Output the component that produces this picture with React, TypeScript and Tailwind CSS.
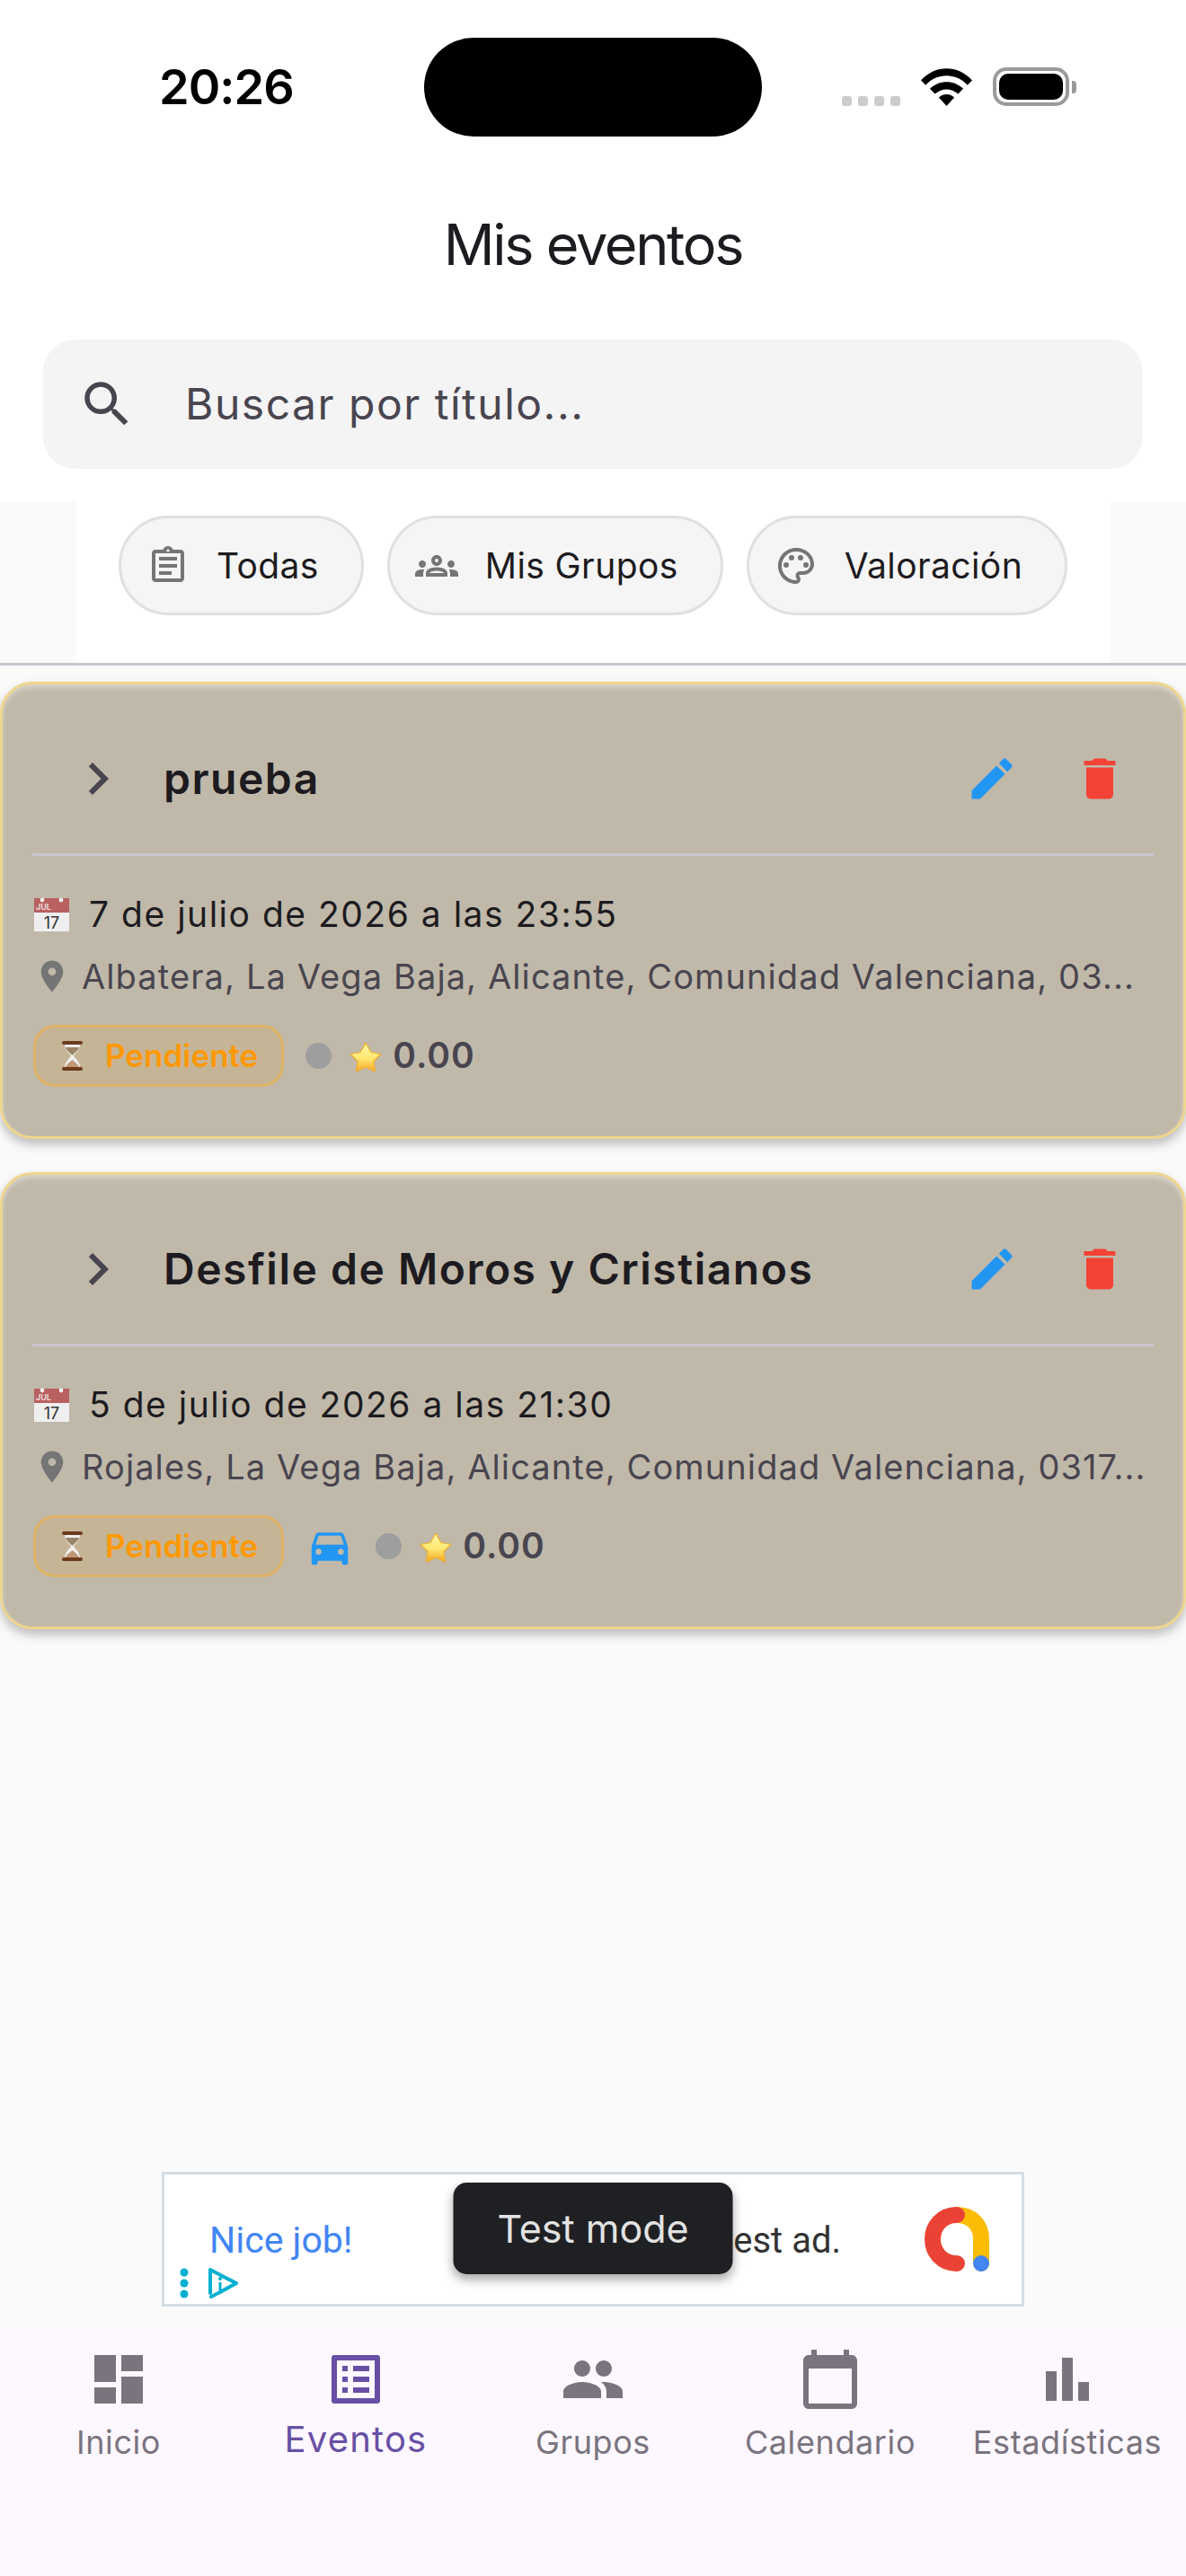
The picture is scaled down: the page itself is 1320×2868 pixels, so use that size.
import React from "react";
import {
  MdSearch, MdChevronRight, MdEdit, MdDelete, MdPlace, MdDirectionsCar,
  MdOutlineAssignment, MdOutlineGroups, MdOutlinePalette,
  MdDashboard, MdListAlt, MdPeople, MdCalendarToday,
} from "react-icons/md";

function CalendarEmoji() {
  return (
    <svg width="39" height="38" viewBox="0 0 39 38" className="ml-px shrink-0">
      <rect x="0" y="1" width="39" height="37" fill="#efefef" />
      <rect x="0" y="1" width="39" height="16" fill="#b96060" />
      <circle cx="9" cy="3" r="2.4" fill="#eee" />
      <circle cx="30" cy="3" r="2.4" fill="#eee" />
      <text x="2" y="14" fontSize="9" fontFamily="Inter" fontWeight="600" fill="#f3e4e4">JUL</text>
      <text x="19.5" y="35" fontSize="18" fontFamily="Inter" textAnchor="middle" fill="#333">17</text>
    </svg>
  );
}

function Hourglass() {
  return (
    <svg width="23" height="33" viewBox="0 0 23 33" className="shrink-0">
      <path d="M3 3 H20 C20 11 14 14 13 16.5 C14 19 20 23 20 30 H3 C3 23 9 19 10 16.5 C9 14 3 11 3 3Z" fill="#efefef" />
      <path d="M4 7 H19 C18 11 14 13 11.5 16 C9 13 5 11 4 7Z" fill="#9c8468" />
      <path d="M11.5 21 C15 24 18 26 19 29 H4 C5 26 8 24 11.5 21Z" fill="#c09878" />
      <rect x="0" y="0" width="23" height="4" rx="2" fill="#6e3a1e" />
      <rect x="0" y="29" width="23" height="4" rx="2" fill="#6e3a1e" />
    </svg>
  );
}

function Star({ id }: { id: string }) {
  return (
    <svg width="36" height="34" viewBox="0 0 36 34" className="shrink-0 mt-[3px]">
      <defs>
        <linearGradient id={id} x1="0" y1="0" x2="0" y2="1">
          <stop offset="0" stopColor="#fff6a8" />
          <stop offset="0.55" stopColor="#ffe770" />
          <stop offset="1" stopColor="#f5a623" />
        </linearGradient>
      </defs>
      <path d="M18 1 L24 11.5 L35 13.5 L27 21.5 L28.5 33 L18 28 L7.5 33 L9 21.5 L1 13.5 L12 11.5 Z" fill={`url(#${id})`} stroke="#f0ac2c" strokeWidth="1.2" strokeLinejoin="round" />
    </svg>
  );
}

function EventCard({ title, date, place, car, id }: { title: string; date: string; place: string; car?: boolean; id: string }) {
  return (
    <div className="rounded-[36px] border-[3px] border-[#eed68f] bg-[#c0b9aa] pt-[22px] pb-[55px] shadow-[0_6px_12px_rgba(0,0,0,0.25),inset_0_7px_7px_-4px_rgba(255,255,255,0.45),inset_4px_0_5px_-4px_rgba(255,255,255,0.3),inset_-4px_0_5px_-4px_rgba(255,255,255,0.3)]">
      <div className="h-[166px] flex items-center pl-[70px] pr-[63px]">
        <MdChevronRight size={72} className="text-[#49454f] shrink-0" />
        <div className="ml-[37px] flex-1 text-[48px] font-semibold tracking-[1.5px] text-[#1d1b20] whitespace-nowrap">{title}</div>
        <MdEdit size={60} className="text-[#2196f3] shrink-0" />
        <MdDelete size={60} className="text-[#f44336] shrink-0 ml-[60px]" />
      </div>
      <div className="h-[3px] mx-[33px] bg-[#cac4d0]" />
      <div className="mt-[46px] h-[38px] pl-[34px] flex items-center">
        <CalendarEmoji />
        <div className="ml-[22px] text-[39px] tracking-[1.5px] text-[#1d1b20] whitespace-nowrap">{date}</div>
      </div>
      <div className="mt-[33px] h-[34px] pl-[34px] flex items-center">
        <MdPlace size={42} className="text-[#757575] shrink-0" />
        <div className="ml-[12px] text-[38px] tracking-[1.1px] text-[#49454f] whitespace-nowrap">{place}</div>
      </div>
      <div className="mt-[37px] pl-[34px] flex items-center">
        <div className="h-[69px] rounded-[24px] border-[3px] border-[#dfb265] bg-[#c5b596] pl-[29px] pr-[26px] flex items-center">
          <Hourglass />
          <span className="ml-[25px] text-[35px] font-semibold text-[#ff9800]">Pendiente</span>
        </div>
        {car && <MdDirectionsCar size={54} className="text-[#2196f3] ml-[24px] shrink-0" />}
        <div className="w-[29px] h-[29px] rounded-full bg-[#9e9e9e] ml-[24px] shrink-0" />
        <div className="ml-[20px]"><Star id={id} /></div>
        <span className="ml-[12px] text-[39px] font-semibold tracking-[1px] text-[#49454f]">0.00</span>
      </div>
    </div>
  );
}

function Chip({ icon, label }: { icon: React.ReactNode; label: string }) {
  return (
    <div className="h-[111px] rounded-full border-[3px] border-[#e0e0e0] bg-[#f5f5f5] pl-[28px] pr-[47px] flex items-center">
      {icon}
      <span className="ml-[30px] mt-[2px] text-[39px] tracking-[0.4px] text-[#1d1b20] whitespace-nowrap">{label}</span>
    </div>
  );
}

function NavItem({ icon, label, active }: { icon: React.ReactNode; label: string; active?: boolean }) {
  return (
    <div className="flex-1 flex flex-col items-center">
      <div className="h-[72px] flex items-center justify-center">{icon}</div>
      {active ? (
        <div className="mt-[9px] leading-[44px] text-[40px] tracking-[1.2px] text-[#6750a4] whitespace-nowrap">{label}</div>
      ) : (
        <div className="mt-[12px] leading-[44px] text-[36px] tracking-[0.6px] text-[#79747e] whitespace-nowrap">{label}</div>
      )}
    </div>
  );
}

export default function App() {
  const nav = "text-[#79747e]";
  return (
    <div className="w-[1320px] h-[2868px] bg-[#fafafa] flex flex-col overflow-hidden font-['Inter',sans-serif]">
      <div className="bg-white">
        <div className="pt-[42px] flex">
          <div className="w-[472px] pl-[177px] flex items-center">
            <span className="text-[54px] font-semibold tracking-[-1px] text-black leading-none">20:26</span>
          </div>
          <div className="w-[376px] h-[110px] rounded-[55px] bg-black shrink-0" />
          <div className="pl-[89px] flex items-end h-[76px] gap-[23px]">
            <div className="flex gap-[7px]">
              <div className="w-[11px] h-[11px] rounded-[3px] bg-[#cccccc]" />
              <div className="w-[11px] h-[11px] rounded-[3px] bg-[#cccccc]" />
              <div className="w-[11px] h-[11px] rounded-[3px] bg-[#cccccc]" />
              <div className="w-[11px] h-[11px] rounded-[3px] bg-[#cccccc]" />
            </div>
            <svg width="57" height="42" viewBox="0 0 172 126">
              <path d="M0 40 C48 -13 124 -13 172 40 L156 56 C118 14 54 14 16 56 Z" fill="#000" />
              <path d="M30 68 C62 38 110 38 142 68 L125 86 C100 65 72 65 47 86 Z" fill="#000" />
              <path d="M60 98 C76 84 96 84 112 98 L86 126 Z" fill="#000" />
            </svg>
            <div className="flex items-center">
              <div className="w-[85px] h-[43px] rounded-[15px] border-[4px] border-[#9a9a9a] p-[3px]">
                <div className="w-full h-full rounded-[10px] bg-black" />
              </div>
              <div className="ml-[3px] w-[5px] h-[14px] rounded-r-[4px] bg-[#9a9a9a]" />
            </div>
          </div>
        </div>
        <div className="mt-[80px] text-center text-[63px] tracking-[-2.3px] leading-[80px] text-[#1d1b20]">Mis eventos</div>
        <div className="mt-[66px] mb-[36px] mx-[48px] h-[144px] rounded-[36px] bg-[#f4f4f5] flex items-center pl-[38px]">
          <MdSearch size={66} className="text-[#49454f] shrink-0" />
          <span className="ml-[54px] text-[48px] tracking-[1.5px] text-[#49454f]">Buscar por título...</span>
        </div>
      </div>

      <div className="mx-[84px] h-[180px] bg-white flex justify-center gap-[26px] pt-[16px]">
        <Chip icon={<MdOutlineAssignment size={48} className="text-[#757575] shrink-0" />} label="Todas" />
        <Chip icon={<MdOutlineGroups size={48} className="text-[#757575] shrink-0" />} label="Mis Grupos" />
        <Chip icon={<MdOutlinePalette size={48} className="text-[#757575] shrink-0" />} label="Valoración" />
      </div>
      <div className="h-[3px] bg-[#cac4d0]" />

      <div className="pt-[18px] flex flex-col gap-[37px]">
        <EventCard id="s1" title="prueba" date="7 de julio de 2026 a las 23:55" place="Albatera, La Vega Baja, Alicante, Comunidad Valenciana, 03..." />
        <EventCard id="s2" car title="Desfile de Moros y Cristianos" date="5 de julio de 2026 a las 21:30" place="Rojales, La Vega Baja, Alicante, Comunidad Valenciana, 0317..." />
      </div>

      <div className="flex-1" />

      <div className="relative mx-auto mb-[24px] w-[960px] h-[150px] border-[3px] border-[#d5dde3] bg-white flex items-center pl-[50px] pr-[36px] font-['Roboto',sans-serif]">
        <span className="mt-[4px] text-[41px] text-[#4285f4] whitespace-nowrap">Nice job!</span>
        <span className="mt-[4px] flex-1 text-right pr-[93px] text-[40px] text-[#333333] whitespace-nowrap">This is a test ad.</span>
        <svg width="72" height="72" viewBox="0 0 72 72" className="shrink-0">
          <path d="M36 9 C52 9 63 20 63 36 V63" fill="none" stroke="#fbbc04" strokeWidth="18" strokeLinecap="round" />
          <path d="M36 9 C19 9 9 22 9 36 C9 50 19 63 36 63" fill="none" stroke="#ea4335" strokeWidth="18" strokeLinecap="round" />
          <circle cx="63" cy="63" r="9" fill="#4285f4" />
        </svg>
        <svg width="70" height="38" viewBox="0 0 70 38" className="absolute left-[16px] bottom-[4px]">
          <circle cx="6" cy="7" r="4.5" fill="#00b0d0" />
          <circle cx="6" cy="19" r="4.5" fill="#00b0d0" />
          <circle cx="6" cy="31" r="4.5" fill="#00b0d0" />
          <path d="M35 30 V4 L64 19 L44 30" fill="none" stroke="#00b0d0" strokeWidth="4" strokeLinejoin="round" strokeLinecap="round" />
          <path d="M36 34 L42 31" fill="none" stroke="#00b0d0" strokeWidth="4" strokeLinecap="round" />
          <circle cx="46" cy="14" r="2" fill="#00b0d0" />
          <path d="M46 18 V27" stroke="#00b0d0" strokeWidth="3" />
        </svg>
        <div className="absolute left-1/2 -translate-x-1/2 top-[9px] w-[311px] h-[102px] rounded-[15px] bg-[#1f2023] shadow-[0_6px_12px_rgba(0,0,0,0.35)] flex items-center justify-center font-['Inter',sans-serif]">
          <span className="text-[43px] text-[#e3e3e3] whitespace-nowrap">Test mode</span>
        </div>
      </div>

      <div className="h-[276px] bg-[#fdf7ff] pt-[21px] flex">
        <NavItem label="Inicio" icon={<MdDashboard size={72} className={nav} />} />
        <NavItem active label="Eventos" icon={<MdListAlt size={72} className="text-[#6750a4]" />} />
        <NavItem label="Grupos" icon={<MdPeople size={72} className={nav} />} />
        <NavItem label="Calendario" icon={<MdCalendarToday size={72} className={nav} />} />
        <NavItem label="Estadísticas" icon={
          <svg width="72" height="72" viewBox="0 0 24 24" className={nav} fill="currentColor"><path d="M4 9h4v11H4zm12 4h4v7h-4zm-6-9h4v16h-4z" /></svg>
        } />
      </div>
    </div>
  );
}
